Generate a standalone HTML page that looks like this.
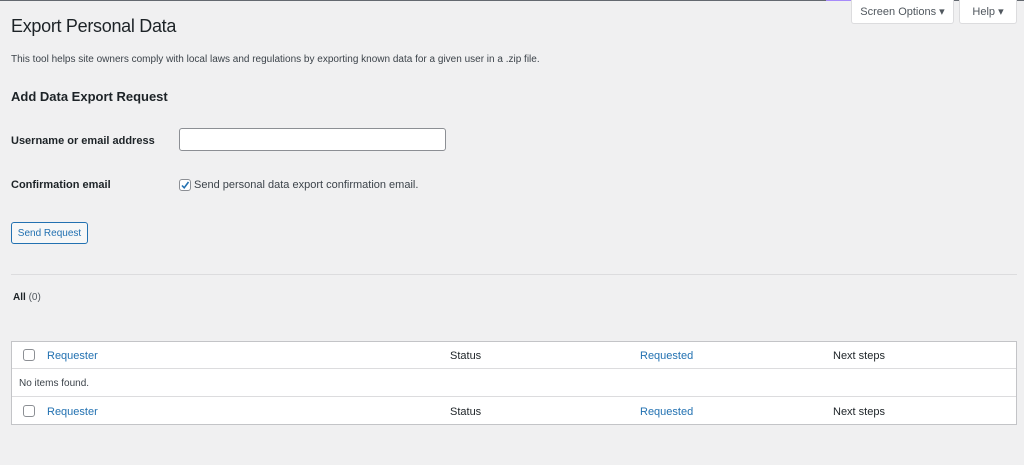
<!DOCTYPE html>
<html><head><style>
body{margin:0;width:1024px;height:465px;background:#f0f0f1;font-family:"Liberation Sans",sans-serif;color:#1d2327;position:relative;overflow:hidden;font-size:11px}
.a{position:absolute}
.topline{left:0;top:0;width:1024px;height:1px;background:#646970}
.btn{background:#fff;border:1px solid #dcdcde;border-top:none;border-radius:0 0 3px 3px;color:#50575e;font-size:11px;line-height:25px;text-align:center;box-sizing:border-box}
.lnk{color:#2271b1}
.cb{width:12px;height:12px;box-sizing:border-box;border:1px solid #8c8f94;border-radius:3px;background:#fff}
</style></head><body>
<div class="a topline"></div>
<div class="a" style="left:826px;top:0;width:81px;height:1px;background:#a78bfa"></div>
<div class="a btn" style="left:851px;top:0;width:103px;height:24px">Screen Options ▾</div>
<div class="a btn" style="left:959px;top:0;width:58px;height:24px">Help ▾</div>
<div class="a" style="left:11px;top:16px;font-size:18px;color:#1d2327;letter-spacing:-0.3px">Export Personal Data</div>
<div class="a" style="left:11px;top:54px;font-size:10px;color:#3c434a">This tool helps site owners comply with local laws and regulations by exporting known data for a given user in a .zip file.</div>
<div class="a" style="left:11px;top:89px;font-size:13px;font-weight:bold">Add Data Export Request</div>
<div class="a" style="left:11px;top:135px;font-size:11px;font-weight:bold">Username or email address</div>
<div class="a" style="left:179px;top:128px;width:267px;height:23px;box-sizing:border-box;background:#fff;border:1px solid #8c8f94;border-radius:3px"></div>
<div class="a" style="left:11px;top:179px;font-size:11px;font-weight:bold">Confirmation email</div>
<div class="a cb" style="left:179px;top:179px"><svg width="10" height="10" style="position:absolute;left:0;top:0"><path d="M2 5.5 L4.2 7.8 L8.5 2" stroke="#2271b1" stroke-width="1.6" fill="none"/></svg></div>
<div class="a" style="left:194px;top:179px;font-size:11px;color:#3c434a">Send personal data export confirmation email.</div>
<div class="a" style="left:11px;top:222px;width:77px;height:22px;box-sizing:border-box;border:1px solid #2271b1;border-radius:3px;background:#f6f7f7;color:#2271b1;font-size:10px;line-height:21px;text-align:center">Send Request</div>
<div class="a" style="left:11px;top:274px;width:1006px;height:1px;background:#dcdcde"></div>
<div class="a" style="left:13px;top:292px;font-size:10px"><b>All</b> <span style="color:#50575e">(0)</span></div>
<div class="a" style="left:11px;top:341px;width:1006px;height:84px;box-sizing:border-box;border:1px solid #c3c4c7;background:#fff"></div>
<div class="a" style="left:12px;top:368px;width:1004px;height:1px;background:#dcdcde"></div>
<div class="a" style="left:12px;top:396px;width:1004px;height:1px;background:#dcdcde"></div>
<div class="a cb" style="left:23px;top:349px"></div>
<div class="a lnk" style="left:47px;top:350px">Requester</div>
<div class="a" style="left:450px;top:350px">Status</div>
<div class="a lnk" style="left:640px;top:350px">Requested</div>
<div class="a" style="left:833px;top:350px">Next steps</div>
<div class="a" style="left:19px;top:378px;font-size:10px;color:#3c434a">No items found.</div>
<div class="a cb" style="left:23px;top:405px"></div>
<div class="a lnk" style="left:47px;top:406px">Requester</div>
<div class="a" style="left:450px;top:406px">Status</div>
<div class="a lnk" style="left:640px;top:406px">Requested</div>
<div class="a" style="left:833px;top:406px">Next steps</div>
</body></html>
